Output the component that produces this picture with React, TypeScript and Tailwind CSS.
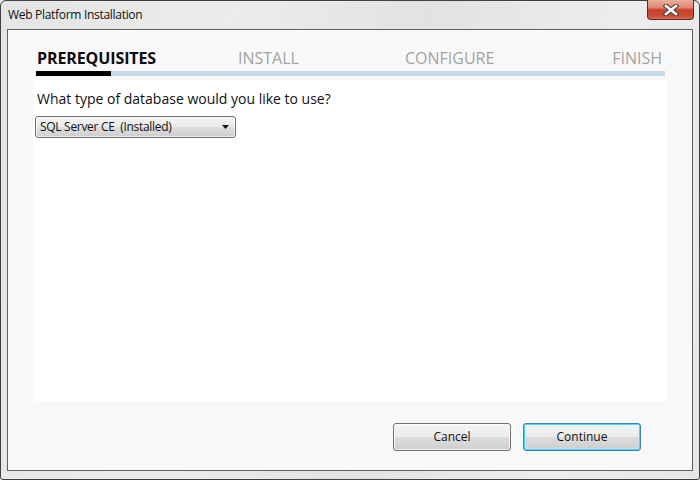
import React from "react";

const font = { fontFamily: '"Open Sans", "Noto Sans", sans-serif' };

function CloseX() {
  return (
    <svg width="16" height="12" viewBox="0 0 16 12">
      <path
        d="M3 2 L13 10 M13 2 L3 10"
        stroke="#3b3b3b"
        strokeWidth="4.6"
        strokeLinecap="square"
        fill="none"
      />
      <path
        d="M3 2 L13 10 M13 2 L3 10"
        stroke="#ffffff"
        strokeWidth="2.6"
        strokeLinecap="square"
        fill="none"
      />
    </svg>
  );
}

export default function App() {
  return (
    <div
      className="w-[700px] h-[480px] bg-[#e9e9e9] text-black"
      style={font}
    >
      <div className="w-[700px] h-[480px] flex flex-col border border-[#404040] rounded-t-[6px] rounded-b-[3px] bg-[linear-gradient(100deg,#e4e4e4_0%,#ececec_30%,#e2e2e2_55%,#ededed_80%,#e6e6e6_100%)]">
        {/* Title bar */}
        <div className="h-[28px] flex justify-between items-start">
          <div className="pl-[7px] pt-[6px] text-[12px] leading-[16px] tracking-[-0.3px] text-[#111]">
            Web Platform Installation
          </div>
          <div className="mr-[5px] -mt-[1px] w-[47px] h-[20px] rounded-b-[4px] border border-t-0 border-[#6b2a1e] bg-[linear-gradient(#ecaea0_0%,#de8671_40%,#c5432a_52%,#c84a30_80%,#d86a52_100%)] flex items-center justify-center">
            <CloseX />
          </div>
        </div>

        {/* Client area */}
        <div className="mx-[6px] h-[442px] border border-[#616161] bg-[#f8f8f8] flex flex-col px-[25px]">
          {/* Tabs */}
          <div className="ml-[3px] mr-[2px] pt-[18px] flex flex-col">
            <div className="flex h-[20px] text-[16px] leading-[20px] pl-[1px] pr-[3px]">
              <div className="w-[201px] font-bold tracking-[-0.1px] text-[#0c0c0c]">PREREQUISITES</div>
              <div className="w-[167px] text-[#a3a3a3]">INSTALL</div>
              <div className="flex-1 text-[#a3a3a3]">CONFIGURE</div>
              <div className="text-[#a3a3a3]">FINISH</div>
            </div>
            <div className="mt-[3px] h-[5px] flex bg-[#c8dae9]">
              <div className="w-[75px] bg-black" />
            </div>
          </div>

          {/* White panel */}
          <div className="mt-[4px] h-[321px] bg-white flex flex-col items-start">
            <div className="pl-[4px] pt-[10px] text-[14px] leading-[18px] text-[#111]">
              What type of database would you like to use?
            </div>
            <div className="ml-[2px] mt-[8px] w-[201px] h-[22px] rounded-[3px] border border-[#707070] bg-[linear-gradient(#f3f3f3_0%,#ebebeb_50%,#dddddd_51%,#cfcfcf_100%)] flex items-center justify-between pl-[4px] pr-[6px] shadow-[inset_0_0_0_1px_rgba(255,255,255,0.7)]">
              <span className="text-[12px] leading-[16px] tracking-[-0.3px] text-[#111] whitespace-pre">
                SQL Server CE  (Installed)
              </span>
              <svg width="7" height="4" viewBox="0 0 7 4">
                <path d="M0 0 H7 L3.5 4 Z" fill="#111" />
              </svg>
            </div>
          </div>

          {/* Buttons */}
          <div className="mt-[22px] flex justify-end gap-[12px] mr-[26px]">
            <div className="w-[118px] h-[28px] rounded-[3px] border border-[#707070] bg-[linear-gradient(#f3f3f3_0%,#ebebeb_50%,#dddddd_51%,#cfcfcf_100%)] shadow-[inset_0_0_0_1px_rgba(255,255,255,0.75)] flex items-center justify-center text-[12px] leading-[16px] text-[#111]">
              Cancel
            </div>
            <div className="w-[118px] h-[28px] rounded-[3px] border border-[#3c7fb1] bg-[linear-gradient(#eaf6fd_0%,#e3eef6_50%,#d4e4ee_51%,#c9dbe8_100%)] shadow-[inset_0_0_0_1px_#48d8fb] flex items-center justify-center text-[12px] leading-[16px] text-[#111]">
              <div className="w-[112px] h-[22px] rounded-[2px] bg-[linear-gradient(#f3f3f3_0%,#ebebeb_50%,#dddddd_51%,#cfcfcf_100%)] flex items-center justify-center">
                Continue
              </div>
            </div>
          </div>
        </div>
      </div>
    </div>
  );
}
